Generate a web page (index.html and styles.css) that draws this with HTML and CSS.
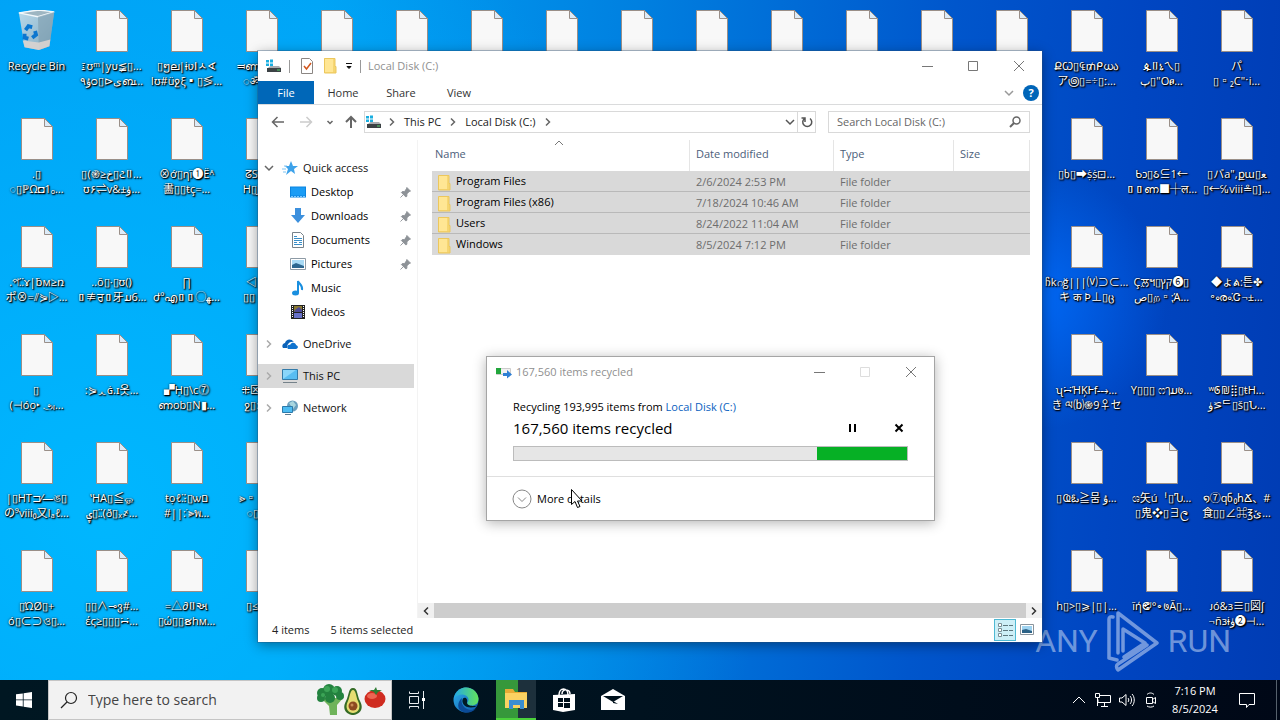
FILE: index.html
```html
<!DOCTYPE html>
<html lang="en">
<head>
<meta charset="utf-8">
<meta name="viewport" content="width=device-width, initial-scale=1">
<title>Local Disk (C:)</title>
<link rel="stylesheet" href="styles.css">
</head>
<body>

<!-- shared icons -->
<svg class="sprite" aria-hidden="true">
<defs>
<linearGradient id="g-edge" x1="0" y1="0" x2="1" y2="1"><stop offset="0" stop-color="#2fb4ee"/><stop offset="1" stop-color="#0c54a8"/></linearGradient>
<linearGradient id="g-edge2" x1="0" y1="0" x2="1" y2="0"><stop offset="0" stop-color="#22a8e8"/><stop offset="1" stop-color="#63e35a"/></linearGradient>
<linearGradient id="g-bin" x1="0" y1="0" x2="1" y2="1"><stop offset="0" stop-color="#cfe0ea"/><stop offset="1" stop-color="#8fa9b8"/></linearGradient>
</defs>
<symbol id="file" viewBox="0 0 32 42"><path d="M.5 .5h23l8 8v33H.5z" fill="#f8f8f8" stroke="#9a8f88"/><path d="M23.500 .5v8h8z" fill="#dcebf8" stroke="#9a8f88"/></symbol>
<symbol id="bin" viewBox="0 0 40 44"><path d="M1 3l15-3 22 2-5 36-11 4-15-3z" fill="url(#g-bin)" opacity=".9"/><path d="M1 3l20 4 17-5-16-2z" fill="#9eb6c2" stroke="#f2f8fb" stroke-width="1.500"/><path d="M21 7l1 35 11-4 5-36z" fill="#7f9cae" opacity=".6"/><path d="M5 32l17 2 12-3-1 7-11 4-15-3z" fill="#d9d4d0" opacity=".9"/><g fill="none" stroke="#0b76cf" stroke-width="4"><path d="M8 21l3-4 4 1"/><path d="M18 22l1 4-4 3"/><path d="M11 30l-4-1 0-4"/></g></symbol>
<symbol id="drive" viewBox="0 0 16 16"><path d="M0 2h3v2.500H0zM4 1.500h3v3H4zM0 5.500h3V8H0zM4 5.500h3v3H4z" fill="#19aee0"/><path d="M3 9l2-1h8l2 2v1H1z" fill="#a9adb0"/><path d="M1 10h14v4H1z" fill="#3c4245"/><path d="M11 12h3" stroke="#55d26a"/></symbol>
<symbol id="folder" viewBox="0 0 16 16"><path d="M2 0h11v15H2z" fill="#f7d774"/><path d="M2 0h9v14H2z" fill="#ffe694"/><path d="M11 8l3 1v6h-3z" fill="#f5d571"/><path d="M2.500 .5v14.500H14V8.500h-1V.5z" fill="none" stroke="#ecc75c"/></symbol>
<symbol id="chev" viewBox="0 0 10 10"><path d="M3 1.500L6.500 5 3 8.500" fill="none" stroke="currentColor" stroke-width="1.500"/></symbol>
<symbol id="chev-d" viewBox="0 0 10 10"><path d="M1 3l4 4 4-4" fill="none" stroke="currentColor" stroke-width="1.500"/></symbol>
<symbol id="pin" viewBox="0 0 12 12"><path d="M7.500 .5l4 4-1.500 .5-2.500 2.500 0 2.500-1 1-5-5 1-1 2.500 0L7 2zM4 8L.5 11.500" fill="#8d9297" stroke="#8d9297"/></symbol>
<symbol id="min" viewBox="0 0 12 12"><path d="M1 6.500h11" stroke="currentColor" fill="none"/></symbol>
<symbol id="max" viewBox="0 0 12 12"><path d="M1.500 1.500h9v9h-9z" stroke="currentColor" fill="none"/></symbol>
<symbol id="close" viewBox="0 0 12 12"><path d="M1 1l10 10M11 1L1 11" stroke="currentColor" fill="none"/></symbol>
</svg>

<main class="desktop">
<ul class="icons" id="icons"></ul>

<div class="watermark" aria-hidden="true">
<span>ANY</span>
<svg width="54" height="62" viewBox="0 0 54 62"><g fill="none" stroke="currentColor" stroke-width="3.500" stroke-linejoin="round" stroke-linecap="round"><path d="M3 48V9q0-3 4-2M12 43V3L51 33 12 60q-3-4 0-6L41 35M11 50L3 48M17 41V19L39 33 18 47"/></g></svg>
<span>RUN</span>
</div>

<section class="window explorer">
<header class="titlebar">
<svg class="i16"><use href="#drive"/></svg>
<i class="sep"></i>
<svg class="i16 check" viewBox="0 0 16 16"><path d="M2.500 .5h8l3 3v12h-11z" fill="#fff" stroke="#8b8683"/><path d="M5 8l2.500 3L12 5" fill="none" stroke="#d2561c" stroke-width="1.500"/></svg>
<svg class="i16"><use href="#folder"/></svg>
<svg class="i8" viewBox="0 0 8 8"><path d="M1 1.500h6M2 4.500h4L4 6.500z" stroke="#111" fill="#111"/></svg>
<i class="sep"></i>
<h1>Local Disk (C:)</h1>
<div class="controls">
<button type="button" aria-label="Minimize"><svg><use href="#min"/></svg></button>
<button type="button" aria-label="Maximize"><svg><use href="#max"/></svg></button>
<button type="button" aria-label="Close"><svg><use href="#close"/></svg></button>
</div>
</header>

<nav class="tabs">
<button type="button" class="file">File</button>
<button type="button">Home</button>
<button type="button">Share</button>
<button type="button">View</button>
<span class="ribbon-end">
<svg class="i10"><use href="#chev-d"/></svg>
<button type="button" class="help" aria-label="Help">?</button>
</span>
</nav>

<div class="address-row">
<button type="button" class="nav back" aria-label="Back"><svg viewBox="0 0 14 14"><path d="M13 7H2M6.500 2L1.500 7l5 5" fill="none" stroke="currentColor" stroke-width="1.500"/></svg></button>
<button type="button" class="nav off" aria-label="Forward"><svg viewBox="0 0 14 14"><path d="M1 7h11M7.500 2l5 5-5 5" fill="none" stroke="currentColor" stroke-width="1.500"/></svg></button>
<button type="button" class="nav small" aria-label="Recent"><svg viewBox="0 0 10 10"><path d="M2.500 4l2.500 2.500L7.500 4" fill="none" stroke="currentColor" stroke-width="1.500"/></svg></button>
<button type="button" class="nav up" aria-label="Up"><svg viewBox="0 0 14 14"><path d="M7 13V2M2 7l5-5 5 5" fill="none" stroke="currentColor" stroke-width="2"/></svg></button>
<div class="address">
<svg class="i16"><use href="#drive"/></svg>
<svg class="i10"><use href="#chev"/></svg>
<a href="#">This PC</a>
<svg class="i10"><use href="#chev"/></svg>
<a href="#">Local Disk (C:)</a>
<svg class="i10"><use href="#chev"/></svg>
<button type="button" class="drop" aria-label="Previous locations"><svg class="i10"><use href="#chev-d"/></svg></button>
<button type="button" class="refresh" aria-label="Refresh"><svg viewBox="0 0 12 12"><path d="M3.500 2.500a4.500 4.500 0 1 0 5.500 0M4 6V2H.5" fill="none" stroke="currentColor" stroke-width="1.500"/></svg></button>
</div>
<label class="search">
<input type="text" placeholder="Search Local Disk (C:)" aria-label="Search Local Disk (C:)">
<svg viewBox="0 0 12 12"><circle cx="7.500" cy="4.500" r="3.500" fill="none" stroke="currentColor" stroke-width="1.500"/><path d="M5 7L1 11" stroke="currentColor" stroke-width="2"/></svg>
</label>
</div>

<div class="panes">
<ul class="tree">
<li class="root"><svg class="i10 dark"><use href="#chev-d"/></svg><svg class="i16" viewBox="0 0 16 16"><path d="M9 1l2 5h5l-4 3 1 5-4-3-5 4 2-6-3-3h4z" fill="#3da2ea"/><path d="M0 9h4M1 12h3M2 6h3" stroke="#7cc3f2"/></svg>Quick access</li>
<li><svg class="i16" viewBox="0 0 16 16"><path d="M0 2.500h16v11H0z" fill="#0a84e0"/><path d="M1 3.500h14v8H1z" fill="#1a9cf5"/><path d="M1 12.500h14" stroke="#7cc8ff" stroke-dasharray="2 1"/></svg>Desktop<svg class="pin"><use href="#pin"/></svg></li>
<li><svg class="i16" viewBox="0 0 16 16"><path d="M5 0h6v7h4l-7 8-7-8h4z" fill="#3c90dd"/></svg>Downloads<svg class="pin"><use href="#pin"/></svg></li>
<li><svg class="i16" viewBox="0 0 16 16"><path d="M2.500 .5h8l3 3v12h-11z" fill="#fff" stroke="#77828a"/><path d="M4 4.500h3M4 6.500h8M4 8.500h8M4 10.500h3m2 0h3M4 12.500h8" stroke="#3a8fc9"/></svg>Documents<svg class="pin"><use href="#pin"/></svg></li>
<li><svg class="i16" viewBox="0 0 16 16"><path d="M.5 2.500h15v11H.5z" fill="#fff" stroke="#8d9aa5"/><path d="M2 4h12v8H2z" fill="#a8daf5"/><path d="M2 9l4-2 8 3v2H2z" fill="#2d6790"/></svg>Pictures<svg class="pin"><use href="#pin"/></svg></li>
<li><svg class="i16" viewBox="0 0 16 16"><path d="M8 13V1c1 3 5 4 4 9" fill="none" stroke="#1a8fdf" stroke-width="2"/><ellipse cx="5.500" cy="13" rx="3.500" ry="2.500" fill="#1a8fdf"/></svg>Music</li>
<li><svg class="i16" viewBox="0 0 16 16"><path d="M1 1h14v14H1z" fill="#222"/><path d="M4 2h8v6H4z" fill="#8b7a32"/><path d="M4 9h8v5H4z" fill="#6771c8"/><path d="M5 6l4-3 3 3v2H4z" fill="#4d4a98"/><path d="M2.500 2v12M13.500 2v12" stroke="#fff" stroke-dasharray="1 1"/></svg>Videos</li>
<li class="root"><svg class="i10"><use href="#chev"/></svg><svg class="i16" viewBox="0 0 16 16"><path d="M1 12c-2-3 1-5 2-5 1-4 6-5 9-1-5-1-7 3-7 6z" fill="#0b62b8"/><path d="M6 13c-2-2 0-5 2-4 2-4 6-2 6 0 3 1 2 4 0 4z" fill="#0f73cf"/></svg>OneDrive</li>
<li class="root current"><svg class="i10"><use href="#chev"/></svg><svg class="i16" viewBox="0 0 16 16"><path d="M.5 1.500h15v10H.5z" fill="#58bdf2" stroke="#337ba9"/><path d="M1 11L14 2H1z" fill="#8ad6fa"/><path d="M1 14.500h14" stroke="#75828a"/></svg>This PC</li>
<li class="root"><svg class="i10"><use href="#chev"/></svg><svg class="i16" viewBox="0 0 16 16"><circle cx="10.500" cy="6" r="5.500" fill="#6a9fbd"/><path d="M7 3l4-2 3 4-3 4z" fill="#a9d6df"/><path d="M.5 6.500h10v6H.5z" fill="#4dbcf2" stroke="#2b7aab"/><path d="M3 14.500h6" stroke="#5b7c90"/></svg>Network</li>
</ul>

<div class="content">
<table>
<thead>
<tr><th class="c-name">Name<svg class="sort" viewBox="0 0 10 6"><path d="M1 5l4-4 4 4" fill="none" stroke="#777"/></svg></th><th class="c-date">Date modified</th><th class="c-type">Type</th><th class="c-size">Size</th></tr>
</thead>
<tbody>
<tr><td><svg class="i16"><use href="#folder"/></svg>Program Files</td><td>2/6/2024 2:53 PM</td><td>File folder</td><td></td></tr>
<tr><td><svg class="i16"><use href="#folder"/></svg>Program Files (x86)</td><td>7/18/2024 10:46 AM</td><td>File folder</td><td></td></tr>
<tr><td><svg class="i16"><use href="#folder"/></svg>Users</td><td>8/24/2022 11:04 AM</td><td>File folder</td><td></td></tr>
<tr><td><svg class="i16"><use href="#folder"/></svg>Windows</td><td>8/5/2024 7:12 PM</td><td>File folder</td><td></td></tr>
</tbody>
</table>
<div class="scrollbar">
<svg class="i10 left"><use href="#chev"/></svg>
<i class="thumb"></i>
<svg class="i10"><use href="#chev"/></svg>
</div>
</div>
</div>

<footer class="status">
<span>4 items</span>
<span>5 items selected</span>
<div class="views">
<button type="button" class="on" aria-label="Details"><svg viewBox="0 0 16 16"><path d="M1.500 1.500h3v3h-3zM1.500 6.500h3v3h-3zM1.500 11.500h3v3h-3z" fill="#fff" stroke="#7b9096"/><path d="M6 3.500h5m1 0h4M6 8.500h5m1 0h4M6 13.500h5m1 0h4" stroke="#5d767d"/></svg></button>
<button type="button" aria-label="Large icons"><svg viewBox="0 0 16 16"><path d="M1.500 2.500h13v10h-13z" fill="#fff" stroke="#8a949c"/><path d="M3 4h10v7H3z" fill="#9fd3f0"/><path d="M3 8l4-1 6 2v2H3z" fill="#2c6286"/></svg></button>
</div>
</footer>
</section>

<section class="window dialog" role="dialog" aria-label="167,560 items recycled">
<header class="titlebar">
<svg class="i16" viewBox="0 0 16 16"><path d="M.5 4.500h14v6H.5z" fill="#f1f1f1" stroke="#ccc"/><path d="M0 4h5v6H0z" fill="#22a63c"/><path d="M7 9h4V6l5 4.500-5 4V12H7z" fill="#2e7fd4"/></svg>
<h2>167,560 items recycled</h2>
<div class="controls">
<button type="button" aria-label="Minimize"><svg><use href="#min"/></svg></button>
<button type="button" aria-label="Maximize" disabled><svg><use href="#max"/></svg></button>
<button type="button" aria-label="Close"><svg><use href="#close"/></svg></button>
</div>
</header>
<div class="job">
<p>Recycling 193,995 items from <a href="#">Local Disk (C:)</a></p>
<div class="job-line">
<strong>167,560 items recycled</strong>
<button type="button" aria-label="Pause"><svg viewBox="0 0 10 10"><path d="M2 1v8M7 1v8" stroke="#000" stroke-width="2"/></svg></button>
<button type="button" aria-label="Cancel"><svg viewBox="0 0 10 10"><path d="M1.500 1.500l7 7M8.500 1.500l-7 7" stroke="#000" stroke-width="2"/></svg></button>
</div>
<div class="progress" role="progressbar" aria-label="Recycling"><i></i></div>
</div>
<footer>
<button type="button" class="more"><svg viewBox="0 0 20 20"><circle cx="10" cy="10" r="9" fill="none" stroke="#888"/><path d="M6 8.500l4 4 4-4" fill="none" stroke="#888"/></svg>More details</button>
</footer>
</section>

<svg class="cursor" viewBox="0 0 12 19"><path d="M.5 .5v15l3.500-3 2.500 6 2.500-1-2.500-5.500h4.500z" fill="#fff" stroke="#000"/></svg>
</main>

<footer class="taskbar">
<button type="button" class="start" aria-label="Start"><svg viewBox="0 0 16 16"><path d="M0 2.300L6.800 1.400V7.500H0zM7.600 1.300L16 0v7.500H7.600zM0 8.300h6.800v6.200L0 13.600zM7.600 8.300H16V16l-8.400-1.200z" fill="#fff"/></svg></button>
<label class="task-search">
<svg class="glass" viewBox="0 0 18 18"><circle cx="11" cy="7" r="5.500" fill="none" stroke="#222" stroke-width="1.200"/><path d="M7 11l-6 6" stroke="#222" stroke-width="1.200"/></svg>
<input type="text" placeholder="Type here to search" aria-label="Type here to search">
<svg class="veg" viewBox="0 0 70 32">
<path d="M9 14h14l5-1-7 8 0 10h-7l-1-9-6-6z" fill="#6fb35a"/><g fill="#23823f"><circle cx="6" cy="9" r="5"/><circle cx="13" cy="6" r="6"/><circle cx="21" cy="7" r="5"/><circle cx="5" cy="14" r="4"/><circle cx="24" cy="12" r="4"/><circle cx="14" cy="14" r="5"/></g><g fill="#3ca457"><circle cx="11" cy="5" r="3"/><circle cx="19" cy="6" r="3"/><circle cx="7" cy="11" r="2"/></g>
<path d="M37 4c5 0 4 8 7 13 5 9-2 14-7 14s-12-5-7-14c3-5 2-13 7-13z" fill="#356b25"/><path d="M37 6c3 0 3 7 5 11 4 8-1 12-5 12s-9-4-5-12c2-4 2-11 5-11z" fill="#e6dd72"/><circle cx="37" cy="22" r="4.500" fill="#8c4a20"/><circle cx="36" cy="21" r="1.500" fill="#c98a55"/>
<ellipse cx="59" cy="15" rx="10.500" ry="9" fill="#cf2c20"/><ellipse cx="56" cy="12" rx="5" ry="3" fill="#ec6552"/><path d="M53 6l5 0 2-3 1 3 5 0-4 2-2 3-2-3z" fill="#2e7d35"/>
</svg>
</label>
<button type="button" class="task" aria-label="Task View"><svg viewBox="0 0 18 18"><path d="M1.500 .5v2h9v-2M1.500 17.500v-2h9v2M1.500 5.500h9v7h-9zM15.500 0v18" fill="none" stroke="#e8edf0"/><path d="M14 7h3v3h-3z" fill="#fff"/></svg></button>
<button type="button" class="task" aria-label="Edge"><svg class="big" viewBox="0 0 26 26"><circle cx="13" cy="13" r="12.500" fill="url(#g-edge)"/><path d="M1 11C3 3 9 .5 13 .5c7 0 12 5 12.500 11 0 5-3 7-7 7-3 0-5-1-4-3 3-4-1-8-5-8-4 0-7 2-8.500 3.500z" fill="url(#g-edge2)"/><path d="M9 11c-2 7 4 12 9 12 3 0 5-1 6-3-3 5-11 8-17 3-3-3-2-9 2-12z" fill="#0b4a96"/><path d="M14 15.500c1-4-2-6-4-4-2 4 1 9 8 9 3 0 5-1 6-2-2 1-10 1-10-3z" fill="#001a26"/></svg></button>
<button type="button" class="task active" aria-label="File Explorer"><svg class="big" viewBox="0 0 26 26"><path d="M2 3h8l2 3h12v16H2z" fill="#e9ac34"/><path d="M2 7h22v15H2z" fill="#fbd262"/><path d="M6 14h15v9h-4v-4h-7v4H6z" fill="#3b8ed0"/></svg></button>
<button type="button" class="task" aria-label="Store"><svg class="big" viewBox="0 0 26 26"><path d="M2 8l22-1v16l-12 2-10-2z" fill="#fff"/><path d="M8 8c0-8 9-8 9 0M11 7c0-6 8-5 8 0" fill="none" stroke="#fff" stroke-width="1.500"/><path d="M7 11h5v4H7zM13 11h6v4h-6zM7 16h5v4H7zM13 16h6v5h-6z" fill="#00111c"/></svg></button>
<button type="button" class="task" aria-label="Mail"><svg class="big" viewBox="0 0 26 26"><path d="M1 9l12-7 12 7v14H1z" fill="#fff"/><path d="M3 9h20l-10 6z" fill="#00111c"/><path d="M13 14l5 3-5-1z" fill="#00111c"/></svg></button>
<div class="tray">
<svg viewBox="0 0 16 16"><path d="M2 11l6-6 6 6" fill="none" stroke="#fff"/></svg>
<svg viewBox="0 0 16 16"><path d="M5 3.500h10.500v7H3v-3M9.500 11v3M6 14.500h7M.5 1.500h4v4h-4zM2.500 6v8" fill="none" stroke="#fff"/></svg>
<svg viewBox="0 0 16 16"><path d="M.5 6h2.500l4-3.500v11L3 10H.5zM9 6c1 1 1 3 0 4M11 4c2 2 2 6 0 8M13 2c3 3 3 9 0 12" fill="none" stroke="#fff"/></svg>
<svg viewBox="0 0 16 16"><path d="M3.500 5.500h6v6h-6zM9.500 7.500l3-2v6l-3-2M4 2.500c2-2 5-2 7 0M4 14c2 1.500 5 1.500 7 0" fill="none" stroke="#fff"/></svg>
<time class="clock"><span>7:16 PM</span><span>8/5/2024</span></time>
<svg class="note" viewBox="0 0 18 18"><path d="M1.500 2.500h15v11H11l-2.500 3v-3h-7z" fill="none" stroke="#fff"/></svg>
<i class="peek"></i>
</div>
</footer>

<script src="script.js"></script>
</body>
</html>
```

FILE: styles.css
```css
* {
 box-sizing: border-box;
}
body {
 margin: 0;
 height: 100vh;
 display: flex;
 flex-direction: column;
 overflow: hidden;
 font-family: "Open Sans","Noto Sans","Noto Sans CJK JP",sans-serif;
 font-size: 11px;
 line-height: 16px;
 color: #000;
}
button, input {
 font: inherit;
 color: inherit;
 border: 0;
 background: none;
 margin: 0;
 padding: 0;
}
a {
 color: inherit;
 text-decoration: none;
}
h1, h2, p, ul {
 margin: 0;
 padding: 0;
 font-size: 11px;
 font-weight: normal;
 list-style: none;
}
svg {
 flex: none;
 display: block;
}
.sprite {
 position: absolute;
 width: 0;
 height: 0;
}
.i16 { width: 16px; height: 16px; }
.i10 { width: 10px; height: 10px; }
.i8 { width: 8px; height: 8px; }

/* desktop */
.desktop {
 flex: 1;
 position: relative;
 overflow: hidden;
 background:
  radial-gradient(circle 130px at 81% 44%, rgba(0,110,255,.8), rgba(0,90,240,0)),
  radial-gradient(ellipse 52% 95% at 8% 75%, rgba(0,184,255,.95), rgba(0,170,255,0)),
  linear-gradient(94deg, #009ff5 0%, #00a2f5 24%, #0080e0 48%, #0056cc 72%, #0046c2 86%, #003cb4 100%);
}
.icons {
 display: grid;
 grid-template-columns: repeat(18, 75px);
 grid-auto-rows: 108px;
 padding-top: 10px;
 margin-left: -1px;
}
.icons li {
 display: flex;
 flex-direction: column;
 align-items: center;
 gap: 6px;
}
.icons svg {
 width: 32px;
 height: 42px;
}
.icons svg.bin {
 width: 40px;
 height: 42px;
}
.label {
 direction: ltr;
 unicode-bidi: bidi-override;
 height: 32px;
 line-height: 15px;
 text-align: center;
 white-space: nowrap;
 color: #fff;
 text-shadow: 1px 1px 1px #000, 0 0 2px rgba(0,0,0,.8), 1px 1px 2px #000;
}
.label span {
 display: block;
 height: 15px;
}
.watermark {
 position: absolute;
 right: 49px;
 bottom: 8px;
 display: flex;
 align-items: center;
 gap: 8px;
 color: rgba(205,220,245,.55);
 font-family: Roboto,sans-serif;
 font-size: 32px;
 line-height: 62px;
}

/* windows */
.window {
 position: absolute;
 display: flex;
 flex-direction: column;
 background: #fff;
}
.explorer {
 left: 258px;
 top: 51px;
 width: 784px;
 height: 591px;
 box-shadow: 0 0 0 1px rgba(40,80,120,.35), 0 3px 12px rgba(0,0,0,.4);
}
.titlebar {
 height: 30px;
 display: flex;
 align-items: center;
 color: #8f8f8f;
}
.explorer .titlebar {
 padding-left: 8px;
 gap: 7px;
}
.check {
 margin-left: 2px;
}
.sep {
 width: 1px;
 height: 13px;
 background: #999;
}
.controls {
 display: flex;
 margin-left: auto;
 align-self: stretch;
}
.controls button {
 width: 46px;
 display: grid;
 place-items: center;
 color: #777;
}
.controls button:disabled {
 color: #ddd;
}
.controls svg {
 width: 12px;
 height: 12px;
}
.tabs {
 height: 24px;
 display: flex;
 border-bottom: 1px solid #dadbdc;
 color: #333;
}
.tabs > button {
 width: 58px;
}
.tabs .file {
 width: 56px;
 background: #0067b8;
 color: #fff;
}
.ribbon-end {
 margin-left: auto;
 display: flex;
 align-items: center;
 gap: 9px;
 padding-right: 3px;
 color: #999;
}
.help {
 width: 16px;
 height: 16px;
 border-radius: 50%;
 background: #0065b8;
 color: #fff;
 font-weight: bold;
}
.address-row {
 height: 35px;
 display: flex;
 align-items: center;
 padding: 0 12px 2px 13px;
}
.nav {
 width: 14px;
 margin-right: 14px;
 color: #666;
}
.nav.off {
 margin-right: 12px;
 color: #ccc;
}
.nav.small {
 width: 10px;
 margin-right: 9px;
}
.nav.up {
 margin-right: 6px;
}
.address {
 flex: 1;
 height: 22px;
 display: flex;
 align-items: center;
 border: 1px solid #d9d9d9;
 padding-left: 1px;
 color: #222;
}
.address > .i10 {
 margin: 0 7px;
 color: #666;
}
.address > .i16 + .i10 {
 margin-left: 5px;
}
.address button {
 height: 20px;
 display: grid;
 place-items: center;
 color: #555;
}
.drop {
 margin-left: auto;
 width: 14px;
}
.refresh {
 width: 18px;
 border-left: 1px solid #d9d9d9;
}
.refresh svg {
 width: 12px;
 height: 12px;
}
.search {
 width: 202px;
 height: 22px;
 margin-left: 12px;
 border: 1px solid #d9d9d9;
 display: flex;
 align-items: center;
 padding: 0 8px;
 color: #666;
}
.search input {
 flex: 1;
 min-width: 0;
}
.search svg {
 width: 12px;
 height: 12px;
}
input::placeholder {
 color: #666;
 opacity: 1;
}
.panes {
 flex: 1;
 display: flex;
 min-height: 0;
}
.tree {
 width: 160px;
 padding: 16px 3px 0 0;
 border-right: 1px solid #f3f3f3;
}
.tree li {
 height: 24px;
 display: flex;
 align-items: center;
 gap: 5px;
 padding: 0 3px 0 32px;
}
.tree .root {
 padding-left: 6px;
 gap: 5px;
 color: #111;
}
.tree .root .i10 {
 color: #aaa;
 margin-right: 3px;
}
.tree .root .dark {
 color: #666;
}
.tree li:not(:first-child).root {
 margin-top: 8px;
}
.tree .current {
 background: #d9d9d9;
}
.pin {
 width: 11px;
 height: 11px;
 margin-left: auto;
}
.content {
 flex: 1;
 display: flex;
 flex-direction: column;
}
table {
 table-layout: fixed;
 width: 598px;
 margin-left: 14px;
 border-collapse: separate;
 border-spacing: 0;
}
th {
 position: relative;
 height: 31px;
 padding: 0 6px 4px;
 border-right: 1px solid #e5e5e5;
 font-weight: normal;
 text-align: left;
 color: #4c607a;
}
th.c-name {
 width: 258px;
 padding-left: 3px;
}
.c-date { width: 144px; }
.c-type { width: 120px; }
.sort {
 position: absolute;
 left: 122px;
 top: 0;
 width: 10px;
 height: 6px;
}
td {
 height: 21px;
 padding: 1px 6px 0;
 background: #d9d9d9;
 border-bottom: 1px solid #b9b9b9;
 line-height: 18px;
 color: #6d6d6d;
}
tbody tr:last-child td {
 border-bottom-color: #d9d9d9;
}
td:first-child {
 color: #000;
 padding-left: 4px;
}
td svg {
 display: inline-block;
 vertical-align: middle;
 margin-right: 4px;
}
.scrollbar {
 height: 15px;
 margin-top: auto;
 display: flex;
 align-items: center;
 gap: 3px;
 padding: 0 3px;
 background: #f0f0f0;
 color: #333;
}
.thumb {
 flex: 1;
 height: 15px;
 background: #cdcdcd;
}
.left {
 transform: scaleX(-1);
}
.status {
 height: 24px;
 display: flex;
 align-items: center;
 gap: 21px;
 padding: 0 4px 0 14px;
 color: #222;
}
.views {
 margin-left: auto;
 display: flex;
}
.views button {
 width: 22px;
 height: 22px;
 display: grid;
 place-items: center;
}
.views .on {
 background: #cdeff7;
 border: 1px solid #4fb9d3;
}
.views svg {
 width: 16px;
 height: 16px;
}

/* recycle progress */
.dialog {
 left: 486px;
 top: 356px;
 width: 449px;
 height: 165px;
 border: 1px solid #a5a5a5;
 box-shadow: 0 2px 12px rgba(0,0,0,.3);
}
.dialog .titlebar {
 padding-left: 9px;
 gap: 4px;
}
.job {
 flex: 1;
 padding: 12px 26px 0;
}
.job a {
 color: #0a5fc0;
}
.job-line {
 display: flex;
 align-items: center;
 height: 26px;
}
.job-line strong {
 flex: 1;
 font-size: 15px;
 font-weight: normal;
}
.job-line button {
 width: 18px;
 height: 18px;
 display: grid;
 place-items: center;
 margin-left: 28px;
}
.job-line svg {
 width: 10px;
 height: 10px;
}
.progress {
 height: 15px;
 margin-top: 5px;
 border: 1px solid #bcbcbc;
 background: #e6e6e6;
 display: flex;
 justify-content: flex-end;
}
.progress i {
 width: 23%;
 background: #06b025;
}
.dialog footer {
 height: 44px;
 border-top: 1px solid #dfdfdf;
 padding: 0 25px;
 display: flex;
 align-items: center;
}
.more {
 display: flex;
 align-items: center;
 gap: 5px;
}
.more svg {
 width: 20px;
 height: 20px;
}
.cursor {
 position: absolute;
 left: 571px;
 top: 489px;
 width: 12px;
 height: 19px;
}

/* taskbar */
.taskbar {
 height: 40px;
 display: flex;
 background: linear-gradient(90deg, #001722, #00121f 50%, #000817);
 color: #fff;
}
.start {
 width: 48px;
 display: grid;
 place-items: center;
}
.start svg {
 width: 16px;
 height: 16px;
}
.task-search {
 width: 344px;
 display: flex;
 align-items: center;
 padding: 0 5px 0 11px;
 gap: 10px;
 background: #f2f2f2;
 border: 1px solid #c5c5c5;
}
.task-search input {
 flex: 1;
 min-width: 0;
 font-size: 14px;
}
.task-search input::placeholder {
 color: #444;
}
.glass {
 width: 18px;
 height: 18px;
}
.veg {
 width: 70px;
 height: 32px;
}
.task {
 width: 49px;
 display: grid;
 place-items: center;
}
.task svg {
 width: 18px;
 height: 18px;
}
.task svg.big {
 width: 26px;
 height: 26px;
}
.task.active {
 width: 40px;
 margin: 0 3px 0 6px;
 background: linear-gradient(90deg, #36983b 55%, #1d303c 55%);
 border-bottom: 2px solid #4bd13b;
}
.tray {
 margin-left: auto;
 display: flex;
 align-items: center;
 gap: 8px;
}
.tray svg {
 width: 16px;
 height: 16px;
}
.clock {
 width: 56px;
 text-align: center;
}
.clock span {
 display: block;
 line-height: 18px;
}
.tray svg.note {
 width: 18px;
 height: 18px;
 margin: 0 12px 0 7px;
}
.peek {
 width: 4px;
 height: 40px;
 border-left: 1px solid #56616c;
}
```

FILE: script.js
```javascript
// one array per desktop row, an entry per column; '' is a file whose name is out of sight
var rows = [
 ['Recycle Bin', '፤ʊᵐ|yᴜ≨▯…/ۇ۹ᴑ▯⊳ىബ…', '▯ໆല|ɨʋⵏㅅ∢/Iʊ#üջξ▪▯≶…', '⫤ണ▯▯…/◌ॐ▯▯…', '', '', '', '', '', '', '', '', '', '', 'ՔꙌ▯₠₥ᑭധა/ア಄▯=÷▯ː…', 'ዹ▯ኒㄟ▯/پ▯"Oፀ…', 'パ/▯▫₂C"ˑi…'],
 ['.▯/◌▯ℙΩ◘1ₒ…', '▯(֎≥خ▯ટ▯…/ʊ۶⇌v&±ۈ…', '⊗ớ▯ηĩ❶Ëᴬ/畵▯▯ŧç=…', 'ᘔS▯▯…/H▯J▯▯…', '', '', '', '', '', '', '', '', '', '', '▯ხ▯➡ṩṩ⊡…', 'Ƅɔ▯ઠ⊆1←/▯▯ണ■┼ल…', '▯バa",քɯ▯ﻌ/▯←℆viii≗▯]…'],
 ['.প⁚⁚ɤ|ƀм≥ռ/ポ⊗=⫽⋟▷…', '..ō▯·▯ʊ()/▯≢ਰ▯牙ມ6…', '∏/ժºഎ▯▯◯ﻬ…', '◁▯▯…/▯▯▫⌐…', '', '', '', '', '', '', '', '', '', '', 'ჩkဂğ|||⒱⊃⊂…/キ क Þ⊥▯ც', 'Çਲ਼ฯ▯קּץ❻▯/ص▯ற▫⁏Ά…', '◆ょል:튼✤/॰ൟ⁚Ꮳ¬±…'],
 ['▯/(⊣óọ‣ அ…', ':⋟ᆺɢ̇.ɪ옷…', '▞Ḥ▯\\c⓻/ണob▯N▮…', '⁜⊠≥▯…/ջ▯:苏…', '', '', '', '', '', '', '', '', '', '', 'ʯ∺ΉĶᎰf⤏…/き ལ⒝֍9♀セ', 'Y▯▯▯ ෆๅມ७…', 'ʷ᠖₪⣿▯ŧН…/ۈ⪞ᄃ▯š▯Ն…'],
 ['|▯HT⊐⁄—ঙ▯/の⁹viii₀又Iₐℓ…', 'ʽНA▯≦ஓ/ۑ▯⁚⁚(ð▯ₓ҂…', 'ŧọℓ⁚⁝▯ѡם/#||:˙⫸พ…', '⪢▫▫▯…/◌▯ஓ…', '', '', '', '', '', '', '', '', '', '', '▯Ҩఓ≧뭄 ۇ…', 'ශ矢úᆝ▯Ⴠ…/▯鬼❖▯∃ල', '໑⑦qნ₀հՃ、#/食▯▯∠⌘℥ێ…'],
 ['▯ΏØ▯+/ó▯⊂⊃ও▯…', '▯▯∧⊸ვ#…/ές≥▯▯▯∺…', '=△∂▯અ/▯ώ▯▯ຮhм…', '▯≤ॐ…', '', '', '', '', '', '', '', '', '', '', 'һ▯>▯⩾|▯|…', 'ĭήⵞᴶ°∘७Ã▯…', 'ᴊó&з≡▯図ʃ/¬ñзɨۈ❷⊣…']
];
var list = document.getElementById('icons');
rows.forEach(function(row) {
 // fill the slot past the right edge so the next row starts at the left
 row.concat(['']).forEach(function(name) {
  var bin = name == 'Recycle Bin';
  var li = document.createElement('li');
  li.innerHTML = '<svg class="' + (bin ? 'bin' : '') + '"><use href="#' + (bin ? 'bin' : 'file') + '"/></svg>';
  var label = document.createElement('div');
  label.className = 'label';
  name.split('/').forEach(function(part) {
   var line = document.createElement('span');
   line.textContent = part;
   label.appendChild(line);
  });
  li.appendChild(label);
  list.appendChild(li);
 });
});
```
